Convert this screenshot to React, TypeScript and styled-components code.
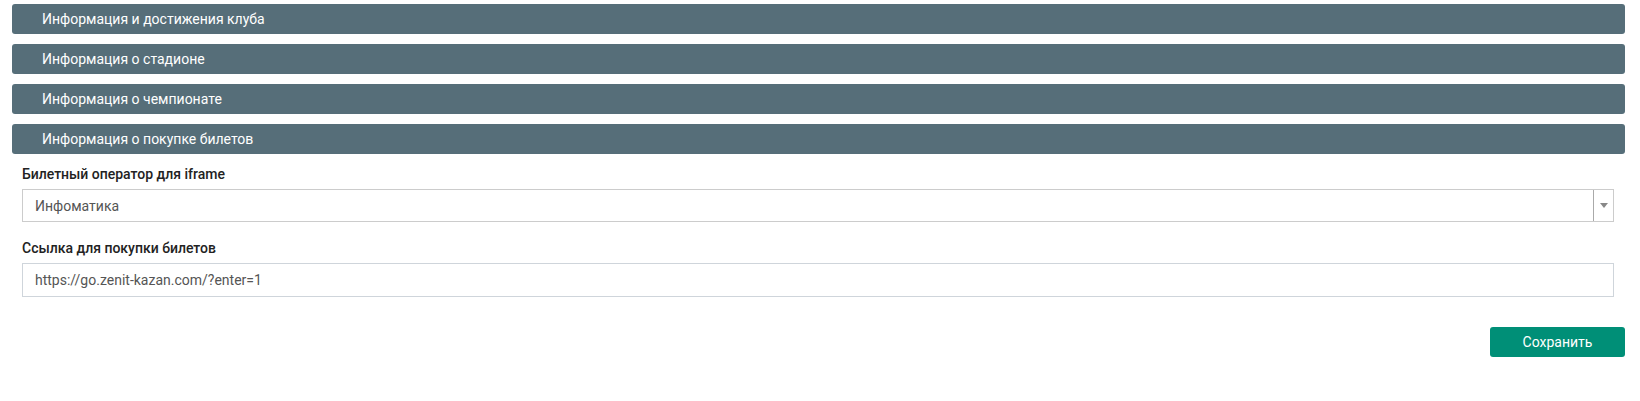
import React from "react";
import styled, { createGlobalStyle } from "styled-components";

const GlobalStyle = createGlobalStyle`
  body {
    margin: 0;
    background: #ffffff;
    font-family: Roboto, "Liberation Sans", Arial, sans-serif;
  }
`;

const sections = [
  "Информация и достижения клуба",
  "Информация о стадионе",
  "Информация о чемпионате",
  "Информация о покупке билетов",
];

export default function App() {
  return (
    <>
      <GlobalStyle />
      <Page>
        {sections.map((title) => (
          <SectionHeader key={title}>{title}</SectionHeader>
        ))}
        <Body>
          <Field>
            <Label>Билетный оператор для iframe</Label>
            <SelectBox>
              <SelectValue>Инфоматика</SelectValue>
              <SelectArrow>
                <Triangle />
              </SelectArrow>
            </SelectBox>
          </Field>
          <Field>
            <Label>Ссылка для покупки билетов</Label>
            <TextInput defaultValue="https://go.zenit-kazan.com/?enter=1" />
          </Field>
        </Body>
        <Footer>
          <SaveButton>Сохранить</SaveButton>
        </Footer>
      </Page>
    </>
  );
}

const Page = styled.div`
  display: flex;
  flex-direction: column;
  gap: 10px;
  padding: 4px 15px 0 12px;
`;

const SectionHeader = styled.div`
  height: 30px;
  box-sizing: border-box;
  background: #566e79;
  border-radius: 3px;
  color: #ffffff;
  font-size: 14px;
  font-weight: 400;
  line-height: 30px;
  padding-left: 30px;
`;

const Body = styled.div`
  display: flex;
  flex-direction: column;
  gap: 16px;
  padding: 0 11px 0 10px;
`;

const Field = styled.div`
  display: flex;
  flex-direction: column;
  gap: 5px;
`;

const Label = styled.label`
  font-size: 14px;
  font-weight: 500;
  line-height: 20px;
  color: #222;
`;

const SelectBox = styled.div`
  display: flex;
  height: 33px;
  box-sizing: border-box;
  border: 1px solid #cccccc;
  background: #fff;
`;

const SelectValue = styled.div`
  flex: 1;
  padding-left: 12px;
  font-size: 14px;
  line-height: 32px;
  color: #555;
`;

const SelectArrow = styled.div`
  width: 19px;
  border-left: 1px solid #aaaaaa;
  display: flex;
  align-items: center;
  justify-content: center;
`;

const Triangle = styled.span`
  width: 0;
  height: 0;
  border-left: 4px solid transparent;
  border-right: 4px solid transparent;
  border-top: 5px solid #888888;
`;

const TextInput = styled.input`
  height: 34px;
  box-sizing: border-box;
  border: 1px solid #cfd5db;
  padding: 0 12px;
  font-family: inherit;
  font-size: 14px;
  color: #555;
  outline: none;
`;

const Footer = styled.div`
  display: flex;
  justify-content: flex-end;
  margin-top: 20px;
`;

const SaveButton = styled.button`
  width: 135px;
  height: 30px;
  border: none;
  border-radius: 3px;
  background: #008f77;
  color: #ffffff;
  font-family: inherit;
  font-size: 14px;
  cursor: pointer;
`;
